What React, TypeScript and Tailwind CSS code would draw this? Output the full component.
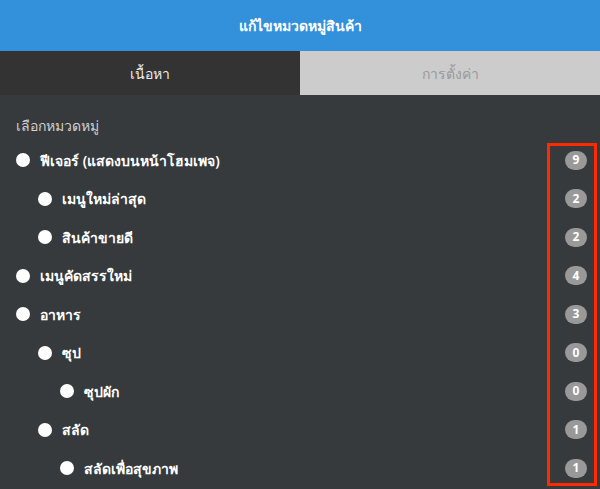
type Cat = { name: string; level: number; count: number };

const cats: Cat[] = [
  { name: "ฟีเจอร์ (แสดงบนหน้าโฮมเพจ)", level: 0, count: 9 },
  { name: "เมนูใหม่ล่าสุด", level: 1, count: 2 },
  { name: "สินค้าขายดี", level: 1, count: 2 },
  { name: "เมนูคัดสรรใหม่", level: 0, count: 4 },
  { name: "อาหาร", level: 0, count: 3 },
  { name: "ซุป", level: 1, count: 0 },
  { name: "ซุปผัก", level: 2, count: 0 },
  { name: "สลัด", level: 1, count: 1 },
  { name: "สลัดเพื่อสุขภาพ", level: 2, count: 1 },
];

const indent = ["pl-4", "pl-[38px]", "pl-[60px]"];

export default function App() {
  return (
    <div className="relative w-[600px] h-[489px] overflow-hidden bg-[#363a3d] font-['Noto_Sans',sans-serif]">
      <div className="h-[51px] flex items-center justify-center bg-[#3391dc] text-white text-[14px] font-semibold">
        แก้ไขหมวดหมู่สินค้า
      </div>
      <div className="grid grid-cols-2 h-[44px]">
        <div className="flex items-center justify-center bg-[#333333] text-[#eeeeee] text-[14px]">
          เนื้อหา
        </div>
        <div className="flex items-center justify-center bg-[#cccccc] text-[#999999] text-[14px]">
          การตั้งค่า
        </div>
      </div>
      <div className="h-[46px] flex items-center pl-4 pt-[14px] text-[14px] text-[#d0d0d0]">
        เลือกหมวดหมู่
      </div>
      <div>
        {cats.map((c, i) => (
          <div key={i} className={`h-[38.5px] flex items-center pr-[13px] ${indent[c.level]}`}>
            <span className="w-[14px] h-[14px] rounded-full bg-white shrink-0" />
            <span className="ml-[10px] flex-1 text-white text-[14px] font-semibold">{c.name}</span>
            <span className="w-[22px] h-[19px] rounded-full bg-[#999999] text-white text-[12px] font-bold flex items-center justify-center">
              {c.count}
            </span>
          </div>
        ))}
      </div>
      <div className="absolute left-[547px] top-[143px] w-[50px] h-[343px] border-[3px] border-[#ff2a00]" />
    </div>
  );
}
